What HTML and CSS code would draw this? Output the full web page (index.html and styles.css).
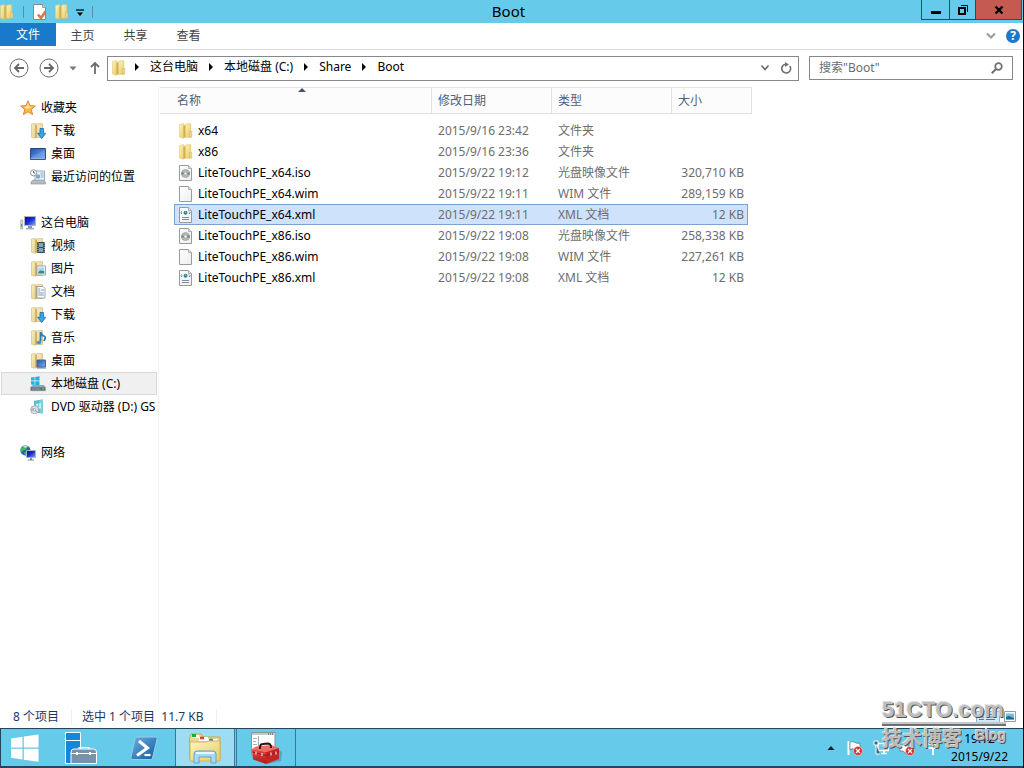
FILE: index.html
```html
<!DOCTYPE html>
<html lang="zh-CN">
<head>
<meta charset="utf-8">
<title>Boot</title>
<link rel="stylesheet" href="styles.css">
</head>
<body>
<svg class="defs" aria-hidden="true">
  <defs>
    <linearGradient id="gold" x1="0" x2="1" y1="0" y2="1"><stop offset="0" stop-color="#fdf5c0"/><stop offset="1" stop-color="#e8cb67"/></linearGradient>
    <linearGradient id="paleGold" x1="0" x2="1" y1="0" y2="1"><stop offset="0" stop-color="#f8efc4"/><stop offset="1" stop-color="#e5cf8b"/></linearGradient>
    <linearGradient id="blue" x1="0" x2="1" y1="0" y2="1"><stop offset="0" stop-color="#2351b5"/><stop offset="1" stop-color="#78b0ee"/></linearGradient>
    <linearGradient id="deep" x1="0" x2="1" y1="0" y2="1"><stop offset="0" stop-color="#0a0a8c"/><stop offset=".5" stop-color="#1a2fd0"/><stop offset="1" stop-color="#8fb0f5"/></linearGradient>
    <linearGradient id="ps" x1="0" x2="1" y1="0" y2="1"><stop offset="0" stop-color="#6bb2e2"/><stop offset="1" stop-color="#11599c"/></linearGradient>
    <linearGradient id="red" x1="0" x2="0" y1="0" y2="1"><stop offset="0" stop-color="#e84840"/><stop offset="1" stop-color="#b01a1a"/></linearGradient>
    <linearGradient id="page" x1="0" x2="1" y1="0" y2="1"><stop offset="0" stop-color="#fff"/><stop offset="1" stop-color="#eee"/></linearGradient>
  </defs>
  <symbol id="folder" viewBox="0 0 16 16">
    <path d="M1.500 1.500 5.500.5v14.800l-4-1.200z" fill="url(#gold)" stroke="#e2c978" stroke-width=".6"/>
    <path d="M6 2.500 9 .8h3.800v13.500H6z" fill="url(#gold)" stroke="#dcc06a" stroke-width=".6"/>
    <path d="M5.500 3v12.300l2-1.500V2z" fill="#d2b04c"/>
    <path d="M11.800 8.500h2v5.500h-2z" fill="#f3e19a" stroke="#c5a955" stroke-width=".5"/>
  </symbol>
  <symbol id="lib" viewBox="0 0 16 16">
    <path d="M1.500 1 5.500.4v14.900l-4-1z" fill="url(#paleGold)" stroke="#d3b76c" stroke-width=".6"/>
    <path d="M5.500 2 8 .6h4.500v13.900h-7z" fill="url(#paleGold)" stroke="#cdb069" stroke-width=".6"/>
    <path d="M5.300 2.500 7 1.500v12.800L5.300 15.200z" fill="#d1b064"/>
  </symbol>
  <symbol id="download" viewBox="0 0 16 16"><use href="#lib"/><path d="M10 5.500h3.500v4.800h2.300L11.700 15.600 7.600 10.300H10z" fill="#36a3e6" stroke="#1e6bad" stroke-width=".8"/></symbol>
  <symbol id="video" viewBox="0 0 16 16"><use href="#lib"/><path d="M7 4h8v11H7z" fill="#34434f"/><path d="M9 5h4v4H9zm0 5h4v4H9z" fill="#78a8bd"/><path d="M8 4.500v10M14.200 4.500v10" stroke="#e2e8eb" stroke-dasharray="1 1.200"/></symbol>
  <symbol id="picture" viewBox="0 0 16 16"><use href="#lib"/><path d="M7 5h8.500v9H7z" fill="#fff" stroke="#8193a0" stroke-width=".8"/><path d="M8.300 6.500h6v6h-6z" fill="#a3d4ef"/><path d="m8.300 11 2-1.500 4 .8v2.200h-6z" fill="#3b8588"/></symbol>
  <symbol id="document" viewBox="0 0 16 16"><use href="#lib"/><path d="M7 2.500h6l2 2V14H7z" fill="#fff" stroke="#8193a0" stroke-width=".8"/><path d="M8.300 5h2M8.300 7h2M11 6h3M8.300 9h5.500M8.300 11h5.500" stroke="#547aab" stroke-width=".8"/></symbol>
  <symbol id="music" viewBox="0 0 16 16"><use href="#lib"/><path d="M10.500 2v9.500M10.500 2q.5 3 3.300 4t0 5" fill="none" stroke="#267db7" stroke-width="1.800"/><ellipse cx="8.900" cy="12.500" rx="2.300" ry="1.800" fill="#3a99d1"/></symbol>
  <symbol id="desk-folder" viewBox="0 0 16 16"><use href="#lib"/><path d="M7 7h8.500v7H7z" fill="url(#blue)" stroke="#4d6789"/><path d="M7 15h9" stroke="#687b8e"/></symbol>
  <symbol id="star" viewBox="0 0 16 16"><path d="m8 .8 2 4.800 5.300.4-4.100 3.400 1.400 5.200L8 11.800l-4.600 2.800 1.400-5.200L.7 6 6 5.600z" fill="#fdb943" stroke="#dd7d22" stroke-width=".9"/><path d="m8 2.600 1.300 3.800 3.800.3-6.300 2-3-1.900 3-.3z" fill="#ffe8a0"/></symbol>
  <symbol id="desktop" viewBox="0 0 16 16"><path d="M.6 2.500h14.800v11H.6z" fill="url(#blue)" stroke="#234280"/><path d="M1 12.700h14" stroke="#9db7dc"/><path d="m1 11 14-7v8H1z" fill="#fff" opacity=".12"/></symbol>
  <symbol id="recent" viewBox="0 0 16 16"><path d="M5 2h9.500v9.500H5z" fill="#edf4f8" stroke="#9aabb7"/><path d="M6.500 6h3v3h-3zM10.500 4h3M10.500 6h3M10.500 8h3" fill="#78acd0" stroke="#78acd0"/><path d="M3 11h10l2.500 2v2H1v-2z" fill="#b4bec6" stroke="#7e8b96" stroke-width=".6"/><circle cx="3.600" cy="3.800" r="3.100" fill="#fff" stroke="#8a98a3"/><path d="M3.600 2v2h1.500" fill="none" stroke="#55626c"/></symbol>
  <symbol id="computer" viewBox="0 0 16 16"><path d="M4.500 1.500h11v9h-11z" fill="url(#deep)" stroke="#aeb6be"/><path d="M8 11h4v2H8z" fill="#8c98a2"/><path d="M6 13.700h8" stroke="#a2acb4" stroke-width="1.500"/><path d="M.7 5h2v9h-2z" fill="#d6dde2" stroke="#8b979e" stroke-width=".6"/><path d="M1.700 9v3" stroke="#2ea42e"/></symbol>
  <symbol id="drive" viewBox="0 0 16 16"><path d="M1 1.500 4.600 1v3.500H1zM5.300.9 9.500.3v4.200H5.300zM1 5.300h3.600v3.600L1 8.400zM5.300 5.300h4.200v4.200L5.300 9z" fill="#20b2e6"/><path d="m2 9.800 1-.8h10.500l2 1.800v4H.5V11z" fill="#8fa3ae"/><path d="M.7 11h14.700v3.800H.7z" fill="#596d78" stroke="#a5b3bb" stroke-width=".6"/><path d="M2 13h8.500" stroke="#94a4ad"/><circle cx="13" cy="12.900" r=".8" fill="#4ae453"/></symbol>
  <symbol id="dvd" viewBox="0 0 16 16"><path d="M4 1.800 12.500.5v14l-8.500-1z" fill="#5cc1cf"/><path d="m9.500 1 3.500-.5v14l-3-.2z" fill="#7ed0da"/><path d="m6 5 2-.3v2H6zm2.600-.4 2.400-.3v2.400H8.600zM6 7.300h2v2H6zm2.600 0H11v2.200H8.600z" fill="#d5f4f5"/><circle cx="4.600" cy="10.800" r="4" fill="#dbe2e6" stroke="#8f9ca3" stroke-width=".7"/><path d="m2.300 9 4.700 4M1 11h3" stroke="#9b8bb5"/><circle cx="4.600" cy="10.800" r="1.200" fill="#fff" stroke="#7d8990" stroke-width=".6"/></symbol>
  <symbol id="network" viewBox="0 0 16 16"><circle cx="5.400" cy="5.400" r="5" fill="#1769b0"/><path d="M2 2q4-2.500 6 0L5.500 5 3 5.500.8 8V4zM4 7h4v2L5.500 10.300z" fill="#49b758"/><path d="M3 1.300Q5.500 0 8 1.500L5 3z" fill="#bce6d0"/><path d="M6.500 5.500h9v7h-9z" fill="url(#deep)" stroke="#aab5c3"/><path d="M10 13h2v1.500h2v1H8v-1h2z" fill="#7c8ca3"/></symbol>
  <symbol id="wim" viewBox="0 0 16 16"><path d="M1.500.5h9l3 3v12h-12z" fill="url(#page)" stroke="#9a9a9a"/><path d="M10.500.5v3h3" fill="#ddd" stroke="#a5a5a5" stroke-width=".8"/></symbol>
  <symbol id="iso" viewBox="0 0 16 16"><use href="#wim"/><circle cx="7.500" cy="8.500" r="4" fill="#b4bcb6" stroke="#9aa39c" stroke-width=".8"/><path d="m7.500 8.500-4-1.500v3zM7.500 8.500l4-1.500v3z" fill="#77857c"/><circle cx="7.500" cy="8.500" r="1.500" fill="#fff" stroke="#98a29b" stroke-width=".8"/></symbol>
  <symbol id="xml" viewBox="0 0 16 16"><use href="#wim"/><path d="M4 4.500 2.800 5.700 4 6.900M11 4.500l1.200 1.200L11 6.900" fill="none" stroke="#425d8b" stroke-width=".9"/><circle cx="7.500" cy="5.700" r="2" fill="#298a92"/><path d="m7 4.700 1.200.8" stroke="#9fdce1"/><path d="M4 10.500h7M4 12.500h7" stroke="#8584ab"/></symbol>
  <symbol id="badge-x" viewBox="0 0 10 10"><circle cx="5" cy="5" r="4.500" fill="#d3312b" stroke="#f6cfcd" stroke-width=".7"/><path d="m3 3 4 4m0-4L3 7" stroke="#fff" stroke-width="1.300"/></symbol>
</svg>

<div class="desktop">
  <header class="titlebar">
    <div class="quick">
      <svg class="icon"><use href="#folder"/></svg>
      <span class="bar"></span>
      <button class="plain" aria-label="属性"><svg class="icon" viewBox="0 0 16 16"><path d="M1.500.5h9l3 3v12h-12z" fill="#fff" stroke="#888"/><path d="M10.500.5v3h3" fill="#ddd" stroke="#999"/><path d="m6 10.500 3 3.500 4.500-6.500" fill="none" stroke="#e3714a" stroke-width="2.600"/></svg></button>
      <button class="plain" aria-label="新建文件夹"><svg class="icon"><use href="#folder"/></svg></button>
      <button class="plain" aria-label="自定义快速访问工具栏"><svg class="caret" viewBox="0 0 8 8"><path d="M0 1h8" stroke="#10242c" stroke-width="1.500"/><path d="M1 3.500h6L4 7z" fill="#000"/></svg></button>
      <span class="bar"></span>
    </div>
    <h1 class="title">Boot</h1>
    <div class="controls">
      <button class="control minimize" aria-label="最小化"><svg viewBox="0 0 10 10"><path d="M0 7.500h10" stroke="#000" stroke-width="3"/></svg></button>
      <button class="control restore" aria-label="还原"><svg viewBox="0 0 10 10"><path d="M1 3h6v6H1z" fill="none" stroke="#000" stroke-width="2"/><path d="M3 .5h6.500v6.500" fill="none" stroke="#000"/></svg></button>
      <button class="control close" aria-label="关闭"><svg viewBox="0 0 10 10"><path d="m1.500 1.500 7 7m0-7-7 7" stroke="#000" stroke-width="2.400"/></svg></button>
    </div>
  </header>

  <nav class="ribbon">
    <button class="tab file">文件</button>
    <button class="tab">主页</button>
    <button class="tab">共享</button>
    <button class="tab">查看</button>
    <div class="ribbon-end">
      <button class="plain" aria-label="展开功能区"><svg class="chevron" viewBox="0 0 10 8"><path d="m1 1.500 4 4 4-4" fill="none" stroke="#999" stroke-width="2"/></svg></button>
      <button class="help" aria-label="帮助">?</button>
    </div>
  </nav>

  <div class="navbar">
    <button class="plain" aria-label="后退"><svg class="round" viewBox="0 0 20 20"><circle cx="10" cy="10" r="9" fill="none" stroke="#6e6e6e"/><path d="M15 10H6m4-4-4 4 4 4" fill="none" stroke="#666" stroke-width="1.800"/></svg></button>
    <button class="plain" aria-label="前进"><svg class="round" viewBox="0 0 20 20"><circle cx="10" cy="10" r="9" fill="none" stroke="#6e6e6e"/><path d="M5 10h9m-4-4 4 4-4 4" fill="none" stroke="#666" stroke-width="1.800"/></svg></button>
    <button class="plain" aria-label="最近浏览的位置"><svg class="caret" viewBox="0 0 8 8"><path d="M.5 2.500h7L4 6.500z" fill="#777"/></svg></button>
    <button class="plain up" aria-label="上移"><svg viewBox="0 0 10 14"><path d="M5 13V2M1 6l4-4 4 4" fill="none" stroke="#6c6c6c" stroke-width="1.800"/></svg></button>
    <div class="address">
      <svg class="icon"><use href="#folder"/></svg>
      <ol class="crumbs">
        <li><a href="#">这台电脑</a></li>
        <li><a href="#">本地磁盘 (C:)</a></li>
        <li><a href="#">Share</a></li>
        <li><a href="#">Boot</a></li>
      </ol>
      <button class="plain" aria-label="以前的位置"><svg class="chevron" viewBox="0 0 10 8"><path d="m1.500 1.500 3.500 4 3.500-4" fill="none" stroke="#666" stroke-width="1.600"/></svg></button>
      <button class="plain" aria-label="刷新"><svg class="refresh" viewBox="0 0 12 12"><path d="M9.800 4A4.400 4.400 0 1 1 5.500 2.200" fill="none" stroke="#707070" stroke-width="1.600"/><path d="M5 0v5l4-2.500z" fill="#707070"/></svg></button>
    </div>
    <div class="search">
      <input type="search" aria-label="搜索" placeholder="搜索&quot;Boot&quot;">
      <svg class="refresh" viewBox="0 0 12 12"><circle cx="7.500" cy="4.500" r="3.300" fill="none" stroke="#707070" stroke-width="1.700"/><path d="M5 7 .8 11.200" stroke="#707070" stroke-width="2"/></svg>
    </div>
  </div>

  <main class="content">
    <aside class="sidebar">
      <ul class="tree">
        <li class="root"><svg class="icon"><use href="#star"/></svg>收藏夹</li>
        <li><svg class="icon"><use href="#download"/></svg>下载</li>
        <li><svg class="icon"><use href="#desktop"/></svg>桌面</li>
        <li><svg class="icon"><use href="#recent"/></svg>最近访问的位置</li>
      </ul>
      <ul class="tree">
        <li class="root"><svg class="icon"><use href="#computer"/></svg>这台电脑</li>
        <li><svg class="icon"><use href="#video"/></svg>视频</li>
        <li><svg class="icon"><use href="#picture"/></svg>图片</li>
        <li><svg class="icon"><use href="#document"/></svg>文档</li>
        <li><svg class="icon"><use href="#download"/></svg>下载</li>
        <li><svg class="icon"><use href="#music"/></svg>音乐</li>
        <li><svg class="icon"><use href="#desk-folder"/></svg>桌面</li>
        <li class="current"><svg class="icon"><use href="#drive"/></svg>本地磁盘 (C:)</li>
        <li><svg class="icon"><use href="#dvd"/></svg>DVD 驱动器 (D:) GS</li>
      </ul>
      <ul class="tree">
        <li class="root"><svg class="icon"><use href="#network"/></svg>网络</li>
      </ul>
    </aside>
    <section class="listing">
      <table class="files">
        <colgroup><col class="c-gutter"><col class="c-name"><col class="c-date"><col class="c-type"><col class="c-size"><col class="c-end"></colgroup>
        <thead>
          <tr><th colspan="2" class="h-name">名称<svg class="sort" viewBox="0 0 8 4"><path d="M0 4h8L4 0z" fill="#44546a"/></svg></th><th>修改日期</th><th>类型</th><th colspan="2">大小</th></tr>
        </thead>
        <tbody>
          <tr><td></td><td><span class="name"><svg class="icon"><use href="#folder"/></svg>x64</span></td><td>2015/9/16 23:42</td><td>文件夹</td><td></td><td></td></tr>
          <tr><td></td><td><span class="name"><svg class="icon"><use href="#folder"/></svg>x86</span></td><td>2015/9/16 23:36</td><td>文件夹</td><td></td><td></td></tr>
          <tr><td></td><td><span class="name"><svg class="icon"><use href="#iso"/></svg>LiteTouchPE_x64.iso</span></td><td>2015/9/22 19:12</td><td>光盘映像文件</td><td>320,710 KB</td><td></td></tr>
          <tr><td></td><td><span class="name"><svg class="icon"><use href="#wim"/></svg>LiteTouchPE_x64.wim</span></td><td>2015/9/22 19:11</td><td>WIM 文件</td><td>289,159 KB</td><td></td></tr>
          <tr class="selected"><td></td><td><span class="name"><svg class="icon"><use href="#xml"/></svg>LiteTouchPE_x64.xml</span></td><td>2015/9/22 19:11</td><td>XML 文档</td><td>12 KB</td><td></td></tr>
          <tr><td></td><td><span class="name"><svg class="icon"><use href="#iso"/></svg>LiteTouchPE_x86.iso</span></td><td>2015/9/22 19:08</td><td>光盘映像文件</td><td>258,338 KB</td><td></td></tr>
          <tr><td></td><td><span class="name"><svg class="icon"><use href="#wim"/></svg>LiteTouchPE_x86.wim</span></td><td>2015/9/22 19:08</td><td>WIM 文件</td><td>227,261 KB</td><td></td></tr>
          <tr><td></td><td><span class="name"><svg class="icon"><use href="#xml"/></svg>LiteTouchPE_x86.xml</span></td><td>2015/9/22 19:08</td><td>XML 文档</td><td>12 KB</td><td></td></tr>
        </tbody>
      </table>
    </section>
  </main>

  <footer class="status">
    <span class="status-item">8 个项目</span>
    <span class="status-item">选中 1 个项目&nbsp; 11.7 KB</span>
    <div class="views">
      <button class="plain" aria-label="详细信息"><svg viewBox="0 0 24 12"><path d="M.5.5h23v11H.5z" fill="#cfe8f7" stroke="#7db8d8"/><path d="M3 3.500h5m2 0h9M3 6h5m2 0h9M3 8.500h5m2 0h9" stroke="#58788c"/></svg></button>
      <button class="plain" aria-label="大缩略图"><svg class="thumbs" viewBox="0 0 12 12"><path d="M.5.500h11v10H.5z" fill="#fff" stroke="#8ca0aa"/><path d="M2 2.500h8v6H2z" fill="#74bde5"/><path d="m2 6 3-1 5 2v1.500H2z" fill="#266b84"/></svg></button>
    </div>
  </footer>

  <footer class="taskbar">
    <button class="task start" aria-label="开始"><svg viewBox="0 0 28 28"><path d="m0 4.500 11.500-1.700v10.700H0zM12.800 2.600 27.500.5v13H12.800zM0 14.800h11.500v10.600L0 23.800zM12.800 14.800h14.700v13L12.800 25.700z" fill="#fff"/></svg></button>
    <button class="task server" aria-label="服务器管理器"><svg viewBox="0 0 32 32"><path d="M.5.5h15v31H.5z" fill="#1488d8" stroke="#fff"/><path d="M1 8.500h14" stroke="#fff"/><path d="M6 20q0-3 3-3h19.500q3 0 3 3v11.500H6z" fill="#7893a8" stroke="#fff"/><path d="M14 17v-1.500h10V17M6 21.500h25" fill="none" stroke="#fff" stroke-width="1.200"/><path d="M12 20v3m13-3v3" stroke="#fff" stroke-width="2"/></svg></button>
    <button class="task shell" aria-label="Windows PowerShell"><svg viewBox="0 0 28 26"><path d="M7 2h19q1.500 0 1.200 1.500L22.500 23q-.4 1.500-2 1.500H2q-1.500 0-1.200-1.500L5 3.500Q5.400 2 7 2z" fill="url(#ps)" stroke="#93cdef"/><path d="m9 6 8.500 7L7 20.500" fill="none" stroke="#fff" stroke-width="3"/><path d="M14.500 20h6" stroke="#fff" stroke-width="2.200"/></svg></button>
    <button class="task running active" aria-label="文件资源管理器"><svg viewBox="0 0 32 32"><path d="M.5 6 2 2h10l2 3h17v22H.5z" fill="#ecd98b" stroke="#c6a74b"/><path d="M3 3h7v3H3z" fill="#fff"/><path d="M3 3.500h4" stroke="#21a73c" stroke-width="3"/><path d="M10 5h9v4h-9z" fill="#fff"/><path d="M11 6h4" stroke="#d3462e" stroke-width="2.500"/><path d="M18 7h10v3H18z" fill="#fff"/><path d="M20 8h4" stroke="#3e82d2" stroke-width="2.500"/><path d="M1 10h16l3-1h11v20H1z" fill="url(#gold)" stroke="#d2b55d"/><path d="M5 31v-9q0-3 3-3h16q3 0 3 3v9h-5v-6H10v6z" fill="#a7d9f2" stroke="#5ba5cf"/><path d="M7 21h18" stroke="#e5f6ff" stroke-width="2"/></svg></button>
    <button class="task running" aria-label="Deployment Workbench"><svg viewBox="0 0 32 32"><path d="M1.500.5H25v22H1.500z" fill="#fff" stroke="#8a9297"/><path d="M2 2h22.500" stroke="#c3cacd" stroke-width="2"/><path d="M18 2h6" stroke="#434b50" stroke-dasharray="1 1"/><path d="M8.500 4v18M3 6.500h4M3 9.500h3M3 12.500h4" stroke="#a5afb4"/><path d="m9 15 17 1 6 4-1 9-14 3z" fill="#000" opacity=".18"/><path d="m2 17 4-2.500L21 13l8 3-13 4z" fill="#ee6a62"/><path d="m2 17 14 3v12L3 27.500z" fill="url(#red)"/><path d="m16 20 13-4v11l-13 5z" fill="#c12622"/><path d="m2 20 14 3.500 13-4" fill="none" stroke="#8e1414" stroke-width=".8"/><path d="M10 17v-2q0-3 3-3l5-.5q2 0 3 2.500v2" fill="none" stroke="#2a1313" stroke-width="1.800"/><path d="M6 19.500v3m6-1.500v3m9-3.500v3m5-4v3" stroke="#f2dede" stroke-width="1.200"/></svg></button>
    <div class="tray">
      <button class="plain" aria-label="显示隐藏的图标"><svg class="caret" viewBox="0 0 8 8"><path d="M.5 6h7L4 2z" fill="#06202a"/></svg></button>
      <svg class="tray-icon" viewBox="0 0 16 16"><path d="M1.500 1v14" stroke="#fff" stroke-width="2"/><path d="M3 2q3-1 5 .5t5 .5v7q-3 1-5-.5T3 9.500z" fill="#fff" stroke="#46606b" stroke-width=".6"/><use href="#badge-x" x="6" y="6" width="10" height="10"/></svg>
      <svg class="tray-icon" viewBox="0 0 16 16"><path d="M5 3.500h10.500v7H5zM8 13.500h6M11 11v2" fill="none" stroke="#fff" stroke-width="1.500"/><path d="M1 1h4v4H1zM3 5v9h4" fill="#3a6478" stroke="#fff"/></svg>
      <svg class="tray-icon" viewBox="0 0 16 16"><path d="M1 5h3l5-4v14l-5-4H1z" fill="#fff" stroke="#46606b" stroke-width=".6"/><use href="#badge-x" x="6" y="6" width="10" height="10"/></svg>
      <svg class="tray-icon" viewBox="0 0 16 16"><path d="M2 4h12M8 1v14M3 8h10" stroke="#fff" stroke-width="2"/></svg>
      <div class="clock"><time>19:12</time><time>2015/9/22</time></div>
    </div>
  </footer>

  <div class="watermark">
    <div class="mark-site">51CTO.com</div>
    <div class="mark-sub"><span class="mark-name">技术博客</span><span class="mark-blog">Blog</span></div>
  </div>
</div>
</body>
</html>
```

FILE: styles.css
```css
* { box-sizing: border-box; }

body {
  margin: 0;
  background: #fff;
  color: #000;
  font: 12px/16px "Noto Sans", "Noto Sans CJK SC", sans-serif;
}

button, input { font: inherit; color: inherit; }
ul, ol { margin: 0; padding: 0; list-style: none; }
svg { display: block; flex: none; }
.defs { position: absolute; width: 0; height: 0; }
.icon { width: 16px; height: 16px; }
.caret { width: 8px; height: 8px; }
.chevron { width: 10px; height: 8px; }
.refresh { width: 12px; height: 12px; }

.plain {
  display: flex;
  padding: 0;
  border: 0;
  background: none;
}

.desktop {
  position: relative;
  display: flex;
  flex-direction: column;
  height: 100vh;
  overflow: hidden;
  border-right: 1px solid #000;
}

.titlebar {
  display: grid;
  grid-template-columns: 1fr auto 1fr;
  height: 23px;
  background: #66caea;
}

.quick {
  display: flex;
  align-items: center;
  gap: 6px;
  margin-left: -1px;
}

.quick .bar {
  width: 1px;
  height: 12px;
  margin: 0 2px;
  background: #4c95ad;
}

.quick .caret { margin-top: 3px; }

.title {
  margin: 0;
  padding-right: 6px;
  font-size: 15px;
  line-height: 23px;
  font-weight: 400;
}

.controls {
  display: flex;
  justify-content: flex-end;
  align-items: flex-start;
  padding-right: 1px;
}

.control {
  display: flex;
  align-items: center;
  justify-content: center;
  width: 28px;
  height: 20px;
  padding: 0;
  border: 1px solid #1d5063;
  border-top: 0;
  border-right: 0;
  background: none;
}

.control svg { width: 10px; height: 10px; }
.control.restore { width: 26px; }
.control.close {
  width: 47px;
  border-right: 1px solid #6d3733;
  background: #c45a50;
}

.ribbon {
  display: flex;
  height: 27px;
  border-bottom: 1px solid #dadbdc;
}

.tab {
  width: 53px;
  padding: 0;
  border: 0;
  background: none;
  color: #444;
}

.tab.file {
  width: 56px;
  height: 23px;
  background: #1979ca;
  color: #fff;
}

.ribbon-end {
  display: flex;
  align-items: center;
  gap: 10px;
  margin-left: auto;
  padding-right: 3px;
}

.help {
  width: 14px;
  height: 14px;
  padding: 0;
  border: 0;
  border-radius: 50%;
  background: #1b78ca;
  color: #fff;
  font-weight: 700;
  line-height: 14px;
}

.navbar {
  display: flex;
  align-items: center;
  gap: 10px;
  height: 36px;
  padding: 0 10px 0 9px;
}

.round { width: 20px; height: 20px; }
.up svg { width: 10px; height: 14px; }
.up { margin: 0 -3px 0 3px; }

.address {
  display: flex;
  flex: 1;
  align-items: center;
  gap: 16px;
  height: 25px;
  padding: 0 6px 0 3px;
  border: 1px solid #888;
}

.address > .plain:nth-last-child(2) { margin-right: -6px; }

.crumbs {
  display: flex;
  flex: 1;
  margin-left: -8px;
  padding-bottom: 2px;
}

.crumbs li { display: flex; align-items: center; }
.crumbs li::before {
  width: 0;
  margin-right: 11px;
  border: 4px solid transparent;
  border-right: 0;
  border-left-color: #000;
  content: "";
}
.crumbs li + li::before { margin-left: 11px; }
.crumbs a { color: #000; text-decoration: none; }

.search {
  display: flex;
  align-items: center;
  width: 204px;
  height: 24px;
  padding: 0 9px;
  border: 1px solid #888;
}

.search input {
  flex: 1;
  min-width: 0;
  padding: 0 0 1px;
  border: 0;
  outline: 0;
  background: none;
}

.search input::placeholder { color: #6d6d6d; opacity: 1; }

.content {
  display: flex;
  flex: 1;
  min-height: 0;
  padding-top: 1px;
}

.sidebar {
  width: 159px;
  padding: 9px 1px 0;
  overflow: hidden;
  border-right: 1px solid #f1f1f1;
}

.tree { margin-bottom: 23px; }

.tree li {
  display: flex;
  align-items: center;
  gap: 5px;
  height: 23px;
  padding-left: 28px;
  border: 1px solid transparent;
  white-space: nowrap;
}

.tree .root { padding-left: 18px; }
.tree .current { border-color: #d8d8d8; background: #f0f0f0; }

.listing { flex: 1; padding-left: 1px; }

.files {
  width: 592px;
  table-layout: fixed;
  border-spacing: 0;
  color: #6d6d6d;
}

.c-gutter { width: 14px; }
.c-name { width: 258px; }
.c-date, .c-type { width: 120px; }
.c-size { width: 76px; }
.c-end { width: 4px; }

.files th {
  height: 27px;
  padding: 0 0 0 6px;
  border: 1px solid #e2e2e2;
  border-left: 0;
  background: #fcfcfc;
  color: #4c607a;
  font-weight: 400;
  text-align: left;
}

.files .h-name { position: relative; padding-left: 17px; }
.sort {
  position: absolute;
  top: 0;
  left: 51%;
  width: 8px;
  height: 4px;
}

.files tbody::before {
  display: table-row;
  height: 6px;
  content: "";
}

.files td {
  height: 21px;
  padding: 0 0 0 6px;
  border: 0 solid #7da2ce;
  white-space: nowrap;
}

.files td:nth-child(1), .files td:nth-child(6) { padding: 0; }
.files td:nth-child(2) { padding-left: 3px; border-left: 1px solid transparent; }
.files td:nth-child(5) { padding: 0 3px 0 0; border-right: 1px solid transparent; text-align: right; }

.name {
  display: flex;
  align-items: center;
  gap: 4px;
  color: #000;
}

.files .selected td:nth-child(n+2):nth-child(-n+5) {
  border-color: #7da2ce;
  border-top-width: 1px;
  border-bottom-width: 1px;
  background: #cfe2fc;
}

.status {
  display: flex;
  align-items: center;
  height: 24px;
  padding: 1px 7px 0 13px;
  color: #1e395b;
}

.status-item {
  padding-right: 12px;
  margin-right: 10px;
  border-right: 1px solid #eee;
}

.views {
  display: flex;
  gap: 4px;
  margin-left: auto;
}

.views svg { width: 24px; height: 12px; }
.views .thumbs { width: 12px; }

.taskbar {
  display: flex;
  height: 40px;
  border: 1px solid #234754;
  border-width: 1px 0 2px 1px;
  background: #66caea;
}

.task {
  display: flex;
  align-items: center;
  justify-content: center;
  width: 62px;
  padding: 0;
  border: 0;
  background: none;
}

.task svg { width: 32px; height: 32px; }
.task.start { width: 48px; }
.task.start svg, .task.shell svg { width: 28px; height: 28px; }
.task.server { width: 64px; }
.task.running {
  width: 60px;
  margin-right: 1px;
  border: 1px solid #347b93;
  border-width: 0 1px;
}
.task.active { background: #9ddcf2; }

.tray {
  display: flex;
  align-items: center;
  gap: 10px;
  margin-left: auto;
  padding-right: 15px;
}

.tray-icon { width: 16px; height: 16px; }
.tray .caret { margin-right: 2px; }

.clock {
  display: flex;
  flex-direction: column;
  align-items: center;
  line-height: 18px;
}

.watermark {
  position: absolute;
  right: 17px;
  bottom: 16px;
  width: 124px;
  color: #bdbdbd;
  font-family: "Liberation Sans", "Noto Sans CJK SC", sans-serif;
  font-weight: 700;
  text-shadow: 1px 1px 0 #555, -1px -1px 0 #ddd;
  pointer-events: none;
}

.mark-site {
  border-bottom: 2px solid #6f6f6f;
  box-shadow: inset 0 -2px #c4c8ca;
  font-size: 22px;
  line-height: 28px;
}

.mark-sub { display: flex; justify-content: space-between; }
.mark-name { font-size: 20px; line-height: 26px; }
.mark-blog { font: 700 14px/18px "Liberation Sans", sans-serif; }
```
